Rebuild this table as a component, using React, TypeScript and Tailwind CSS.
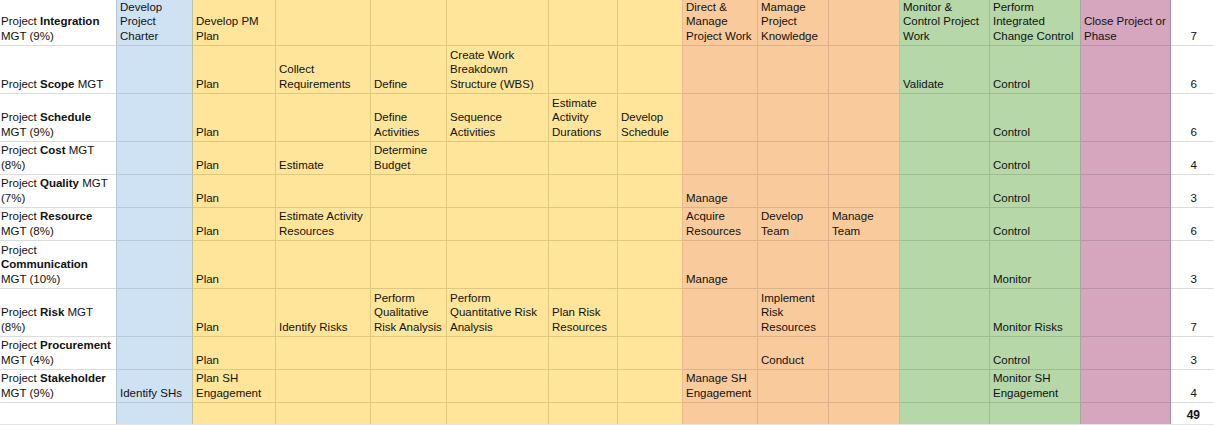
import React from "react";

type Line = React.ReactNode;
type Cell = Line[] | null;

const colCls = [
  "bg-white border-b-[#dcdcdc] border-r-[#b9c5d0] pl-[1px]",
  "bg-[#cfe2f3] border-b-[#b7c8d7] border-r-[#c2c29a] pl-[3px]",
  "bg-[#ffe599] border-b-[#e2c77e] border-r-[#e2c77e] pl-[3px]",
  "bg-[#ffe599] border-b-[#e2c77e] border-r-[#e2c77e] pl-[3px]",
  "bg-[#ffe599] border-b-[#e2c77e] border-r-[#e2c77e] pl-[3px]",
  "bg-[#ffe599] border-b-[#e2c77e] border-r-[#e2c77e] pl-[3px]",
  "bg-[#ffe599] border-b-[#e2c77e] border-r-[#e2c77e] pl-[3px]",
  "bg-[#ffe599] border-b-[#e2c77e] border-r-[#e6bd86] pl-[3px]",
  "bg-[#f9cb9c] border-b-[#ddb189] border-r-[#ddb189] pl-[3px]",
  "bg-[#f9cb9c] border-b-[#ddb189] border-r-[#ddb189] pl-[3px]",
  "bg-[#f9cb9c] border-b-[#ddb189] border-r-[#c9c194] pl-[3px]",
  "bg-[#b6d7a8] border-b-[#9dbd90] border-r-[#9dbd90] pl-[3px]",
  "bg-[#b6d7a8] border-b-[#9dbd90] border-r-[#a8a89a] pl-[3px]",
  "bg-[#d5a6bd] border-b-[#bb91a6] border-r-[#b08ea0] pl-[3px]",
  "bg-white border-b-[#dcdcdc] border-r-white pr-[16px] text-right",
];

const totalCls = "bg-white border-r-white pr-[13px] text-right";

const P = (bold: string, after?: string) => (
  <>
    Project <b>{bold}</b>
    {after ? ` ${after}` : ""}
  </>
);

const E: Cell = null;

const rows: Cell[][] = [
  [
    [P("Integration"), "MGT (9%)"],
    ["Develop", "Project", "Charter"],
    ["Develop PM", "Plan"],
    E, E, E, E, E,
    ["Direct &", "Manage", "Project Work"],
    ["Mamage", "Project", "Knowledge"],
    E,
    ["Monitor &", "Control Project", "Work"],
    ["Perform", "Integrated", "Change Control"],
    ["Close Project or", "Phase"],
    ["7"],
  ],
  [
    [P("Scope", "MGT")],
    E,
    ["Plan"],
    ["Collect", "Requirements"],
    ["Define"],
    ["Create Work", "Breakdown", "Structure (WBS)"],
    E, E, E, E, E,
    ["Validate"],
    ["Control"],
    E,
    ["6"],
  ],
  [
    [P("Schedule"), "MGT (9%)"],
    E,
    ["Plan"],
    E,
    ["Define", "Activities"],
    ["Sequence", "Activities"],
    ["Estimate", "Activity", "Durations"],
    ["Develop", "Schedule"],
    E, E, E, E,
    ["Control"],
    E,
    ["6"],
  ],
  [
    [P("Cost", "MGT"), "(8%)"],
    E,
    ["Plan"],
    ["Estimate"],
    ["Determine", "Budget"],
    E, E, E, E, E, E, E,
    ["Control"],
    E,
    ["4"],
  ],
  [
    [P("Quality", "MGT"), "(7%)"],
    E,
    ["Plan"],
    E, E, E, E, E,
    ["Manage"],
    E, E, E,
    ["Control"],
    E,
    ["3"],
  ],
  [
    [P("Resource"), "MGT (8%)"],
    E,
    ["Plan"],
    ["Estimate Activity", "Resources"],
    E, E, E, E,
    ["Acquire", "Resources"],
    ["Develop", "Team"],
    ["Manage", "Team"],
    E,
    ["Control"],
    E,
    ["6"],
  ],
  [
    ["Project", <b>Communication</b>, "MGT (10%)"],
    E,
    ["Plan"],
    E, E, E, E, E,
    ["Manage"],
    E, E, E,
    ["Monitor"],
    E,
    ["3"],
  ],
  [
    [P("Risk", "MGT"), "(8%)"],
    E,
    ["Plan"],
    ["Identify Risks"],
    ["Perform", "Qualitative", "Risk Analysis"],
    ["Perform", "Quantitative Risk", "Analysis"],
    ["Plan Risk", "Resources"],
    E, E,
    ["Implement", "Risk", "Resources"],
    E, E,
    ["Monitor Risks"],
    E,
    ["7"],
  ],
  [
    [P("Procurement"), "MGT (4%)"],
    E,
    ["Plan"],
    E, E, E, E, E, E,
    ["Conduct"],
    E, E,
    ["Control"],
    E,
    ["3"],
  ],
  [
    [P("Stakeholder"), "MGT (9%)"],
    ["Identify SHs"],
    ["Plan SH", "Engagement"],
    E, E, E, E, E,
    ["Manage SH", "Engagement"],
    E, E, E,
    ["Monitor SH", "Engagement"],
    E,
    ["4"],
  ],
  [
    E, E, E, E, E, E, E, E, E, E, E, E, E, E,
    [<b className="text-[12px]">49</b>],
  ],
];

export default function App() {
  const last = rows.length - 1;
  return (
    <div
      className="w-[1214px] h-[425px] overflow-hidden bg-white text-[#111] text-[11.5px] leading-[14.5px]"
      style={{ fontFamily: '"Liberation Sans", Arial, sans-serif' }}
    >
      <div className="grid grid-cols-[117px_76px_83px_95px_76px_102px_69px_65px_75px_71px_71px_90px_91px_90px_43px] grid-rows-[46px_48px_48px_33px_33px_33px_48px_48px_33px_33px_21px]">
        {rows.map((row, ri) =>
          row.map((cell, ci) => {
            const isTotal = ri === last && ci === 14;
            const cls = isTotal ? totalCls : colCls[ci];
            return (
              <div
                key={`${ri}-${ci}`}
                className={`flex flex-col justify-end overflow-hidden whitespace-nowrap pb-[2px] border-solid ${
                  ri === last ? "border-r" : "border-r border-b"
                } ${cls}`}
              >
                {cell && cell.map((line, li) => <div key={li}>{line}</div>)}
              </div>
            );
          })
        )}
      </div>
      <div className="h-[4px] bg-[#e4e4e4]" />
    </div>
  );
}
